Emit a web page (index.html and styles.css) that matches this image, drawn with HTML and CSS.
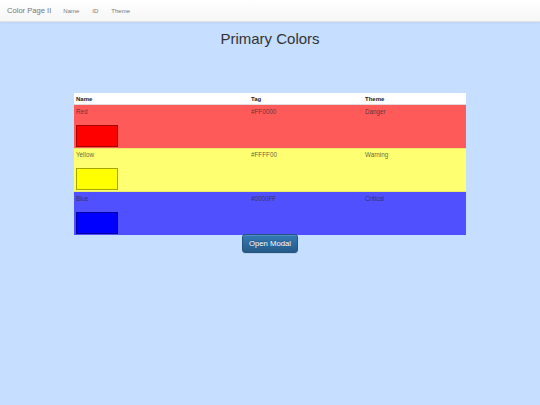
FILE: index.html
```html
<!DOCTYPE html>
<html>
<head>
<meta charset="utf-8">
<link rel="stylesheet" href="styles.css">
</head>
<body>
<nav class="navbar">
  <span class="brand">Color Page II</span>
  <ul class="nav">
    <li>Name</li>
    <li>ID</li>
    <li>Theme</li>
  </ul>
</nav>
<h1 class="title">Primary Colors</h1>
<table class="colors">
  <thead>
    <tr><th class="c-name">Name</th><th class="c-tag">Tag</th><th>Theme</th></tr>
  </thead>
  <tbody>
    <tr class="row-red">
      <td><div class="label">Red</div><div class="swatch sw-red"></div></td>
      <td><div class="label">#FF0000</div></td>
      <td><div class="label">Danger</div></td>
    </tr>
    <tr class="row-yellow">
      <td><div class="label">Yellow</div><div class="swatch sw-yellow"></div></td>
      <td><div class="label">#FFFF00</div></td>
      <td><div class="label">Warning</div></td>
    </tr>
    <tr class="row-blue">
      <td><div class="label">Blue</div><div class="swatch sw-blue"></div></td>
      <td><div class="label">#0000FF</div></td>
      <td><div class="label">Critical</div></td>
    </tr>
  </tbody>
</table>
<div class="actions">
  <button class="btn">Open Modal</button>
</div>
</body>
</html>
```
FILE: styles.css
```css
html, body {
  margin: 0;
  padding: 0;
}
body {
  background: #c6deff;
  font-family: "Liberation Sans", Arial, sans-serif;
  color: #333;
  width: 540px;
  height: 405px;
  overflow: hidden;
}
.navbar {
  height: 21px;
  background: linear-gradient(#ffffff, #f6f6f6);
  border-bottom: 1px solid #e2e2e2;
  box-shadow: 0 1px 2px rgba(0,0,0,0.06);
  display: flex;
  align-items: center;
  padding-left: 7px;
  box-sizing: content-box;
}
.brand {
  font-size: 7.6px;
  color: #777;
  margin-right: 12px;
}
.nav {
  list-style: none;
  display: flex;
  margin: 0;
  padding: 0;
}
.nav li {
  font-size: 6px;
  color: #777;
  margin-right: 13px;
}
.title {
  font-size: 15px;
  font-weight: normal;
  line-height: 17px;
  text-align: center;
  margin: 8px 0 46px;
  color: #333;
}
.colors {
  width: 392px;
  margin: 0 auto;
  border-collapse: collapse;
  table-layout: fixed;
  font-size: 6.3px;
}
.colors th {
  background: #fff;
  text-align: left;
  font-weight: bold;
  font-size: 6px;
  color: #222;
  padding: 2px 2px 1px;
  line-height: 8px;
  border-bottom: 1px solid #ddd;
}
.c-name { width: 171px; }
.c-tag { width: 110px; }
.colors td {
  vertical-align: top;
  padding: 2.5px 2px 1px;
  line-height: 8px;
  border-top: 1px solid rgba(0,0,0,0.08);
}
.label {
  height: 8px;
  color: rgba(40,40,40,0.75);
}
.swatch {
  width: 40px;
  height: 20px;
  margin-top: 9px;
  border: 1px solid rgba(0,0,0,0.35);
}
.row-red { background: #ff5a5a; }
.row-yellow { background: #ffff72; }
.row-blue { background: #5050ff; }
.sw-red { background: #ff0000; }
.sw-yellow { background: #ffff00; }
.sw-blue { background: #0000ff; }
.actions {
  display: flex;
  justify-content: center;
}
.btn {
  font-family: "Liberation Sans", Arial, sans-serif;
  font-size: 7.7px;
  color: #fff;
  background: linear-gradient(#337ab7, #265a88);
  border: 1px solid #245580;
  border-radius: 3px;
  width: 56px;
  height: 19px;
  padding: 0;
  margin-top: -1px;
  text-shadow: 0 -1px 0 rgba(0,0,0,0.2);
  box-shadow: inset 0 1px 0 rgba(255,255,255,0.15), 0 1px 1px rgba(0,0,0,0.075);
}
```
